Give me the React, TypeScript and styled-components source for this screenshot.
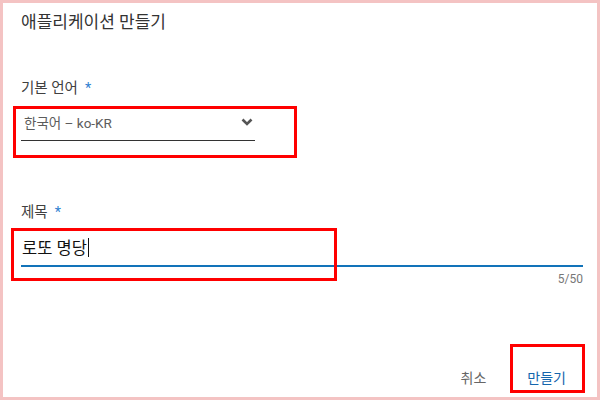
import React from "react";
import styled, { createGlobalStyle } from "styled-components";

const Global = createGlobalStyle`
  html, body { margin: 0; padding: 0; background: #ffffff; }
  body { font-family: Roboto, "Noto Sans CJK KR", sans-serif; }
  * { box-sizing: border-box; }
`;

const Frame = styled.div`
  width: 600px;
  height: 400px;
  border: 3px solid #f4c3c3;
  background: #ffffff;
  padding: 7px 14px 0 18px;
  display: flex;
  flex-direction: column;
`;

const Title = styled.h2`
  margin: 0;
  font-size: 17px;
  line-height: 24px;
  font-weight: 400;
  color: #333333;
`;

const Label = styled.div<{ $top: number }>`
  margin-top: ${(p) => p.$top}px;
  font-size: 14.5px;
  line-height: 20px;
  color: #404040;
`;

const Star = styled.span`
  color: #2f7fd0;
  margin-left: 7px;
`;

const Field = styled.div<{ $top: number; $width?: number }>`
  position: relative;
  margin-top: ${(p) => p.$top}px;
  width: ${(p) => (p.$width ? `${p.$width}px` : "100%")};
`;

const Mark = styled.div<{ $l: number; $t: number; $w: number; $h: number }>`
  position: absolute;
  left: ${(p) => p.$l}px;
  top: ${(p) => p.$t}px;
  width: ${(p) => p.$w}px;
  height: ${(p) => p.$h}px;
  border: 3px solid #ff0000;
  pointer-events: none;
`;

const Select = styled.div`
  display: flex;
  align-items: center;
  justify-content: space-between;
  height: 34px;
  padding: 0 2px 3px 3px;
  border-bottom: 1px solid #333333;
  font-size: 13.5px;
  color: #5c5c5c;
`;

const Input = styled.div`
  display: flex;
  align-items: center;
  height: 34px;
  padding: 0 0 4px 1px;
  border-bottom: 2px solid #1273b9;
  font-size: 16.5px;
  color: #111111;
`;

const Caret = styled.span`
  display: inline-block;
  width: 1px;
  height: 19px;
  background: #111111;
  margin-left: 1px;
`;

const Counter = styled.div`
  margin-top: 4px;
  text-align: right;
  font-size: 12px;
  line-height: 16px;
  color: #777777;
`;

const Actions = styled.div`
  margin-top: auto;
  margin-bottom: 2px;
  display: flex;
  justify-content: flex-end;
  gap: 25px;
  padding-right: 9px;
`;

const Button = styled.button<{ $primary?: boolean }>`
  position: relative;
  height: 36px;
  padding: 0 8px;
  border: none;
  background: transparent;
  font-family: Roboto, "Noto Sans CJK KR", sans-serif;
  font-size: 14px;
  color: ${(p) => (p.$primary ? "#1466ad" : "#666666")};
  cursor: pointer;
`;

export default function App() {
  return (
    <>
      <Global />
      <Frame>
        <Title>애플리케이션 만들기</Title>
        <Label $top={45}>
          기본 언어<Star>*</Star>
        </Label>
        <Field $top={8} $width={234}>
          <Select>
            <span>한국어 – ko-KR</span>
            <svg width="12" height="8" viewBox="0 0 12 8">
              <polyline
                points="1.5,1.5 6,6 10.5,1.5"
                fill="none"
                stroke="#555555"
                strokeWidth="2.6"
              />
            </svg>
          </Select>
          <Mark $l={-8} $t={-1} $w={284} $h={52} />
        </Field>
        <Label $top={62}>
          제목<Star>*</Star>
        </Label>
        <Field $top={10}>
          <Input>
            로또 명당
            <Caret />
          </Input>
          <Mark $l={-10} $t={-5} $w={326} $h={53} />
        </Field>
        <Counter>5/50</Counter>
        <Actions>
          <Button>취소</Button>
          <Button $primary>
            만들기
            <Mark $l={-9} $t={-15} $w={75} $h={49} />
          </Button>
        </Actions>
      </Frame>
    </>
  );
}
